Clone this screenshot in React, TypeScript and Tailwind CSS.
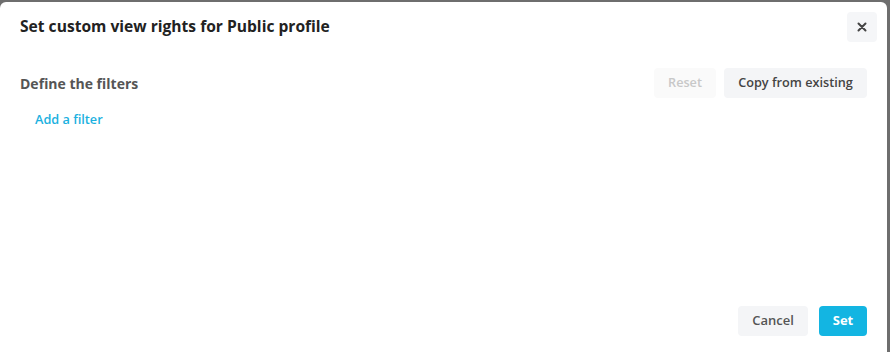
import React from "react";

export default function App() {
  return (
    <div className="w-[890px] h-[352px] bg-[#6e6e6e] pt-[2px] pr-[3px] overflow-hidden" style={{ fontFamily: '"Open Sans", sans-serif' }}>
      <div className="w-[887px] h-[356px] bg-white rounded-[6px] flex flex-col">
        <div className="flex items-center justify-between pl-[20px] pr-[10px] pt-[10px] h-[50px] -mt-[5px]">
          <h1 className="text-[15.6px] font-bold text-[#222]">Set custom view rights for Public profile</h1>
          <button className="w-[30px] h-[30px] rounded-[4px] bg-[#f5f6f8] flex items-center justify-center text-[#444]">
            <svg width="10" height="10" viewBox="0 0 10 10"><path d="M1.5 1.5L8.5 8.5M8.5 1.5L1.5 8.5" stroke="#444" strokeWidth="2" strokeLinecap="round" /></svg>
          </button>
        </div>
        <div className="flex items-center justify-between pl-[20px] pr-[20px] mt-[21px]">
          <h2 className="text-[14px] font-bold text-[#555]">Define the filters</h2>
          <div className="flex gap-[8px]">
            <button className="h-[30px] w-[62px] rounded-[4px] bg-[#fafafa] text-[12.7px] font-semibold text-[#c8c8c8]">Reset</button>
            <button className="h-[30px] w-[143px] rounded-[4px] bg-[#f4f5f7] text-[12.7px] font-semibold text-[#444]">Copy from existing</button>
          </div>
        </div>
        <div className="pl-[35px] mt-[8px]">
          <span className="text-[12.7px] font-semibold text-[#1ab1e0]">Add a filter</span>
        </div>
        <div className="flex-1" />
        <div className="flex justify-end gap-[11px] pr-[20px] pb-[22px]">
          <button className="h-[30px] w-[70px] rounded-[4px] bg-[#f4f5f7] text-[13px] font-semibold text-[#555]">Cancel</button>
          <button className="h-[30px] w-[48px] rounded-[4px] bg-[#13b5e2] text-[13px] font-bold text-white">Set</button>
        </div>
      </div>
    </div>
  );
}
